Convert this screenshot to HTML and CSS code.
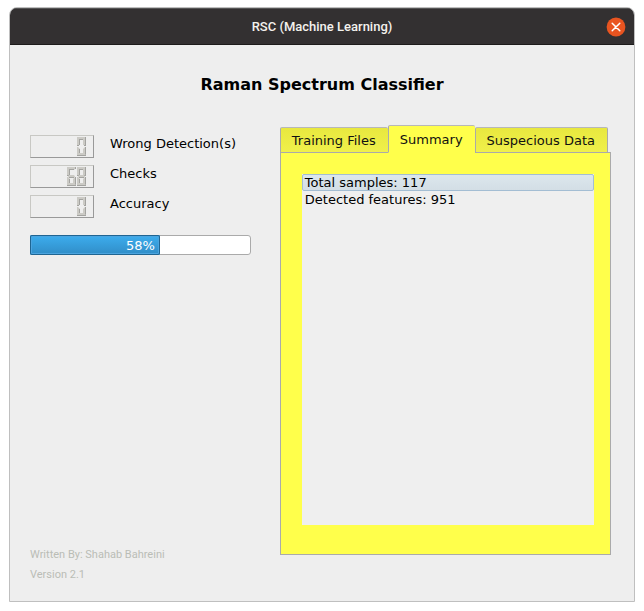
FILE: index.html
```html
<!DOCTYPE html>
<html lang="en">
<head>
<meta charset="utf-8">
<title>RSC (Machine Learning)</title>
<link rel="stylesheet" href="styles.css">
</head>
<body>
<svg class="defs" aria-hidden="true">
  <defs>
    <g id="seg-h"><path class="face" d="M0 0h9v1l-2 2h-5l-2-2z"/><path class="dark" d="M2 2.5h5M8.5 0v2"/></g>
    <g id="seg-b"><path class="face" d="M2 0h5l2 2v1h-9v-1z"/><path class="dark" d="M0 2.5h9"/></g>
    <g id="seg-m"><path class="face" d="M2 0h5l1 1.5l-1 1.5h-5l-1-1.5z"/><path class="dark" d="M2 2.5h5"/></g>
    <g id="seg-v"><path class="face" d="M0 0h1l2 2v6h-3z"/><path class="dark" d="M2.5 2v6M0 8.5h2"/></g>
    <g id="seg-r"><path class="face" d="M3 0h-1l-2 2v6h3z"/><path class="dark" d="M2.5 0v8M1 8.5h2"/></g>
    <g id="zero">
      <use href="#seg-h"/><use href="#seg-v"/><use href="#seg-r" x="6"/>
      <use href="#seg-v" y="10"/><use href="#seg-r" x="6" y="10"/><use href="#seg-b" y="16"/>
    </g>
    <g id="six">
      <use href="#seg-h"/><use href="#seg-v"/><use href="#seg-m" y="8"/>
      <use href="#seg-v" y="10"/><use href="#seg-r" x="6" y="10"/><use href="#seg-b" y="16"/>
    </g>
    <g id="eight"><use href="#zero"/><use href="#seg-m" y="8"/></g>
  </defs>
</svg>
<div class="window">
  <header class="titlebar">
    <span class="titlebar-text">RSC (Machine Learning)</span>
    <button class="close" type="button" aria-label="Close">
      <svg viewBox="0 0 20 20" width="20" height="20"><circle cx="10" cy="10" r="9.4"/><path d="M6.2 6.2l7.6 7.6M13.8 6.2l-7.6 7.6"/></svg>
    </button>
  </header>
  <main class="content">
    <h1>Raman Spectrum Classifier</h1>
    <div class="columns">
      <section class="stats">
        <div class="stat">
          <svg class="lcd" role="img" aria-label="0" viewBox="0 0 62 21"><use href="#zero" x="46" y="1"/></svg>
          <span>Wrong Detection(s)</span>
        </div>
        <div class="stat">
          <svg class="lcd" role="img" aria-label="68" viewBox="0 0 62 21"><use href="#six" x="36" y="1"/><use href="#eight" x="46" y="1"/></svg>
          <span>Checks</span>
        </div>
        <div class="stat">
          <svg class="lcd" role="img" aria-label="0" viewBox="0 0 62 21"><use href="#zero" x="46" y="1"/></svg>
          <span>Accuracy</span>
        </div>
        <div class="progress" role="progressbar" aria-label="Progress" aria-valuemin="0" aria-valuemax="100" aria-valuenow="58">
          <div class="progress-fill" style="width:58%"><span>58%</span></div>
        </div>
        <footer class="credits">
          <p>Written By: Shahab Bahreini</p>
          <p>Version 2.1</p>
        </footer>
      </section>
      <section class="tabs">
        <div class="tablist" role="tablist">
          <button class="tab" type="button" role="tab" aria-selected="false">Training Files</button>
          <button class="tab active" type="button" role="tab" aria-selected="true" id="tab-summary" aria-controls="summary">Summary</button>
          <button class="tab" type="button" role="tab" aria-selected="false">Suspecious Data</button>
        </div>
        <div class="panel" role="tabpanel" id="summary" aria-labelledby="tab-summary">
          <ul class="list">
            <li class="selected">Total samples: 117</li>
            <li>Detected features: 951</li>
          </ul>
        </div>
      </section>
    </div>
  </main>
</div>
</body>
</html>
```

FILE: styles.css
```css
* { box-sizing: border-box; }

body {
  margin: 0;
  padding: 7px 9px 9px;
  min-height: 100vh;
  display: flex;
  background: #fff;
  color: #000;
  font: 13px/17px "DejaVu Sans", sans-serif;
}

.defs { position: absolute; width: 0; height: 0; }

.window {
  flex: 1;
  display: flex;
  flex-direction: column;
  border: 1px solid #bfbfbf;
  border-radius: 8px 8px 0 0;
  background: #eee;
  overflow: hidden;
}

.titlebar {
  display: grid;
  grid-template-columns: 1fr auto 1fr;
  align-items: center;
  height: 37px;
  padding: 0 8px;
  border-top: 1px solid #555;
  border-bottom: 1px solid #1d1b1b;
  background: #333031;
}

.titlebar-text {
  grid-column: 2;
  color: #f4f2ee;
  font: 500 13px/20px Roboto, sans-serif;
}

.close {
  justify-self: end;
  display: flex;
  padding: 0;
  border: 0;
  background: none;
}
.close circle { fill: #e95420; }
.close path { stroke: #fff; stroke-width: 1.5; stroke-linecap: round; }

.content {
  flex: 1;
  display: flex;
  flex-direction: column;
  padding: 29px 23px 0 20px;
}

h1 {
  margin: 0 -3px 29px 0;
  font-size: 16px;
  line-height: 22px;
  text-align: center;
}

.columns {
  flex: 1;
  display: grid;
  grid-template-columns: 2fr 3fr;
  gap: 29px;
}

.stats {
  display: flex;
  flex-direction: column;
  padding: 10px 0 16px;
}

.stat {
  display: flex;
  gap: 16px;
  height: 30px;
}

.lcd {
  width: 64px;
  height: 23px;
  border: 1px solid;
  border-color: #c8c8c4 #999 #999 #c8c8c4;
}
.face { fill: #cbcac5; }
.dark { fill: none; stroke: #a3a3a0; }

.progress {
  height: 20px;
  margin-top: 10px;
  border: 1px solid #aaa;
  border-radius: 3px;
  background: #fff;
}

.progress-fill {
  height: 20px;
  margin: -1px;
  box-sizing: content-box;
  padding-right: 3px;
  border-radius: 2px;
  box-shadow: inset 0 0 0 1px #1f6592, inset 0 0 0 2px #4ba4df;
  background: linear-gradient(#3daeef, #308cc6);
  color: #fff;
  line-height: 22px;
  text-align: right;
}
.progress-fill span { margin-right: 2px; }

.credits {
  margin-top: auto;
  color: #babdb6;
  font: 11px/20px Roboto, sans-serif;
}
.credits p { margin: 0; }

.tabs {
  display: flex;
  flex-direction: column;
  padding-bottom: 46px;
}

.tablist {
  display: flex;
  align-items: flex-end;
  height: 28px;
  margin-bottom: -1px;
  z-index: 1;
}

.tab {
  height: 26px;
  padding: 0 12px 0 11px;
  border: 1px solid #aaa;
  border-top-color: #b8b8b8;
  border-right-width: 0;
  border-radius: 2px 2px 0 0;
  background: linear-gradient(#e8e83f, #f0f04a);
  color: #111;
  font: inherit;
  white-space: nowrap;
}
.tab:last-child { border-right-width: 1px; }
.tab.active {
  height: 28px;
  border-bottom-color: #ffff4b;
  background: #ffff4b;
}

.panel {
  flex: 1;
  display: flex;
  padding: 21px 16px 29px 21px;
  border: 1px solid #aaa;
  background: #ffff4b;
}

.list {
  flex: 1;
  margin: 0;
  padding: 0;
  list-style: none;
  background: #efefef;
}
.list li {
  padding: 0 2px;
  border: 0 solid transparent;
  border-width: 0 1px;
}
.list .selected {
  border: 1px solid #a3bdd3;
  border-radius: 2px;
  background: linear-gradient(#dce7ed, #d3dee5);
  line-height: 15px;
}
```
